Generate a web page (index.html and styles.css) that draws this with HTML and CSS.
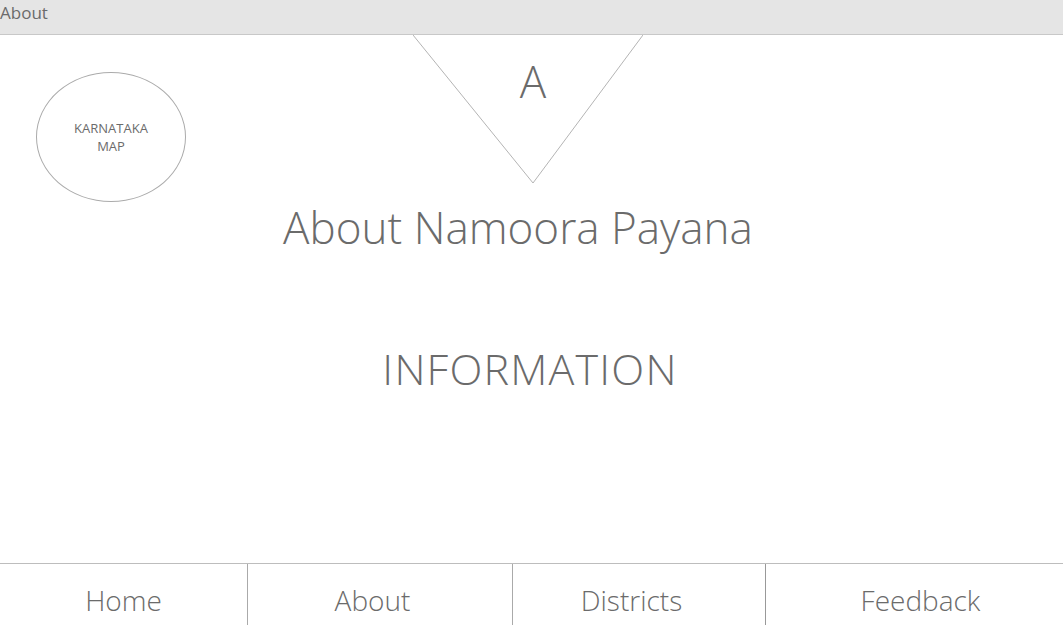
FILE: index.html
```html
<!DOCTYPE html>
<html lang="en">
<head>
<meta charset="utf-8">
<title>About</title>
<link rel="stylesheet" href="styles.css">
</head>
<body>
<div class="page">
  <header class="topbar">About</header>
  <section class="hero">
    <div class="map">KARNATAKA<br>MAP</div>
    <div class="logo">
      <svg class="logo-shape" width="230" height="149" viewBox="0 0 230 149">
        <polyline points="0,0 120,148 230,0" fill="none" stroke="#b4b4b4" stroke-width="1"/>
      </svg>
      <span class="logo-letter">A</span>
    </div>
  </section>
  <h1 class="title">About Namoora Payana</h1>
  <p class="info">INFORMATION</p>
  <div class="spacer"></div>
  <nav class="nav">
    <div class="nav-item nav-home">Home</div>
    <div class="nav-item nav-about">About</div>
    <div class="nav-item nav-districts">Districts</div>
    <div class="nav-item nav-feedback">Feedback</div>
  </nav>
</div>
</body>
</html>
```

FILE: styles.css
```css
* { box-sizing: border-box; }
html, body { margin: 0; padding: 0; background: #fff; }
body {
  font-family: "Open Sans", "Noto Sans", "Liberation Sans", sans-serif;
  font-weight: 300;
  color: #6b6b6b;
}
.page {
  display: flex;
  flex-direction: column;
  width: 1063px;
  height: 625px;
  overflow: hidden;
}
.topbar {
  height: 35px;
  background: #e5e5e5;
  border-bottom: 1px solid #c8c8c8;
  font-size: 17px;
  line-height: 26px;
  padding-left: 0;
  color: #6b6b6b;
  font-weight: 400;
}
.hero {
  display: flex;
  align-items: flex-start;
  height: 148px;
}
.map {
  margin: 37px 0 0 36px;
  width: 150px;
  height: 130px;
  border: 1px solid #ababab;
  border-radius: 50%;
  display: flex;
  align-items: center;
  justify-content: center;
  text-align: center;
  font-size: 13px;
  line-height: 18px;
  font-weight: 400;
  color: #6b6b6b;
}
.logo {
  margin-left: 227px;
  display: grid;
  width: 230px;
  height: 149px;
}
.logo-shape, .logo-letter { grid-area: 1 / 1; }
.logo-letter {
  justify-self: center;
  align-self: start;
  margin-top: 24px;
  margin-left: 10px;
  font-size: 44px;
  line-height: 1;
}
.title {
  margin: 22px 0 0 0;
  padding-right: 27px;
  text-align: center;
  font-size: 44px;
  line-height: 1;
  font-weight: 300;
}
.info {
  margin: 98px 0 0 0;
  padding-right: 3px;
  text-align: center;
  font-size: 43px;
  letter-spacing: 1.2px;
  line-height: 1;
}
.spacer { flex: 1; }
.nav {
  display: flex;
  height: 62px;
  border-top: 1px solid #bdbdbd;
}
.nav-item {
  padding-top: 22px;
  text-align: center;
  font-size: 28px;
  line-height: 1;
}
.nav-home { width: 247px; }
.nav-about { width: 265px; border-left: 1px solid #aaa; padding-right: 15px; }
.nav-districts { width: 253px; border-left: 1px solid #aaa; padding-right: 15px; }
.nav-feedback { width: 298px; border-left: 1px solid #999; padding-left: 12px; }
```
